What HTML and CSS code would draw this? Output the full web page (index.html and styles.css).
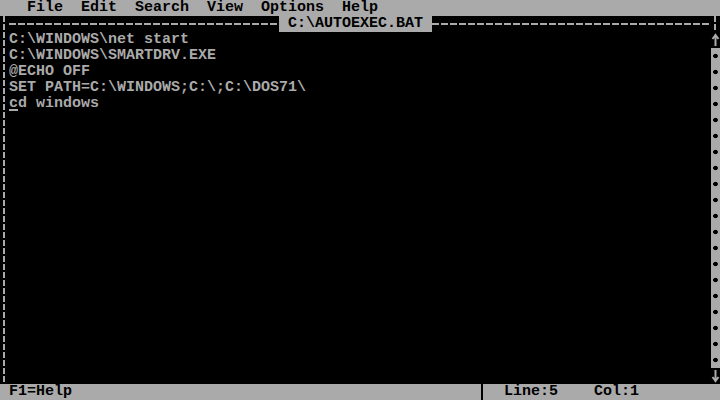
FILE: index.html
```html
<!DOCTYPE html>
<html>
<head>
<meta charset="utf-8">
<link rel="stylesheet" href="styles.css">
</head>
<body>
<div class="screen">
  <div class="menubar">   File  Edit  Search  View  Options  Help</div>
  <div class="titlerow">
    <div class="corner"></div>
    <div class="hline hline-left"></div>
    <div class="title"> C:\AUTOEXEC.BAT </div>
    <div class="hline"></div>
    <div class="corner"></div>
  </div>
  <div class="main">
    <div class="lborder"></div>
    <div class="text">
      <div class="line">C:\WINDOWS\net start</div>
      <div class="line">C:\WINDOWS\SMARTDRV.EXE</div>
      <div class="line">@ECHO OFF</div>
      <div class="line">SET PATH=C:\WINDOWS;C:\;C:\DOS71\</div>
      <div class="line"><span class="cursor">c</span>d windows</div>
    </div>
    <div class="scrollbar">
      <div class="arrow"><svg width="9" height="16" viewBox="0 0 9 16"><path d="M4.5 3 V14 M1.5 7 L4.5 3 L7.5 7" fill="none" stroke="#aaa" stroke-width="2"/></svg></div>
      <div class="track"></div>
      <div class="arrow"><svg width="9" height="16" viewBox="0 0 9 16"><path d="M4.5 2 V13 M1.5 9 L4.5 13 L7.5 9" fill="none" stroke="#aaa" stroke-width="2"/></svg></div>
    </div>
  </div>
  <div class="status">
    <div class="status-left"> F1=Help</div>
    <div class="divider"></div>
    <div class="status-right">  Line:5    Col:1</div>
  </div>
</div>
</body>
</html>
```
FILE: styles.css
```css
html, body {
  margin: 0;
  padding: 0;
  background: #000;
}
.screen {
  width: 720px;
  height: 400px;
  display: flex;
  flex-direction: column;
  background: #000;
  color: #aaa;
  font-family: "Liberation Mono", "DejaVu Sans Mono", monospace;
  font-size: 15px;
  font-weight: bold;
  line-height: 16px;
  overflow: hidden;
}
.menubar {
  height: 16px;
  background: #aaa;
  color: #000;
  white-space: pre;
}
.titlerow {
  height: 16px;
  display: flex;
}
.corner {
  width: 9px;
  height: 16px;
  background: repeating-linear-gradient(to bottom, #aaa 0 6px, transparent 6px 8px) no-repeat 3px 0 / 2px 16px;
}
.hline {
  flex: 1;
  height: 16px;
  background: repeating-linear-gradient(to right, #aaa 0 7px, transparent 7px 9px) no-repeat 0 7px / 100% 2px;
}
.hline-left {
  flex: 0 0 270px;
}
.title {
  background: #aaa;
  color: #000;
  white-space: pre;
  width: 153px;
}
.main {
  display: flex;
  height: 352px;
}
.lborder {
  width: 9px;
  background: repeating-linear-gradient(to bottom, #aaa 0 6px, transparent 6px 8px) no-repeat 3px 0 / 2px 100%;
}
.text {
  flex: 1;
}
.line {
  height: 16px;
  white-space: pre;
}
.cursor {
  display: inline-block;
  height: 16px;
  vertical-align: top;
  background: linear-gradient(#aaa, #aaa) no-repeat 0 13px / 9px 2px;
}
.scrollbar {
  width: 9px;
  display: flex;
  flex-direction: column;
}
.arrow {
  height: 16px;
}
.arrow svg {
  display: block;
}
.track {
  flex: 1;
  background: radial-gradient(circle at 4.5px 8px, #000 0 2px, transparent 2.6px) 0 0 / 9px 16px, #aaa;
}
.status {
  height: 16px;
  display: flex;
  background: #aaa;
  color: #000;
  white-space: pre;
}
.status-left {
  width: 477px;
}
.divider {
  width: 9px;
  background: linear-gradient(#000, #000) no-repeat 4px 0 / 2px 100%;
}
.status-right {
  flex: 1;
}
```
